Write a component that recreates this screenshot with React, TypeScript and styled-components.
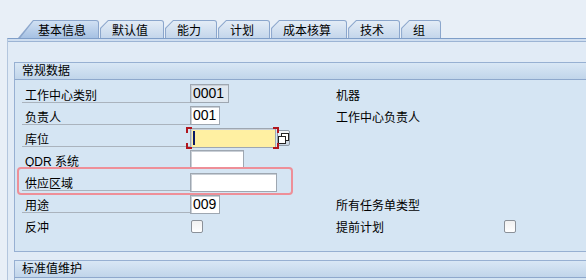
import React from 'react';
import styled, { createGlobalStyle } from 'styled-components';

const GlobalStyle = createGlobalStyle`
  html, body {
    margin: 0;
    padding: 0;
    overflow: hidden;
  }
  body {
    font-family: "Liberation Sans", "Noto Sans CJK SC", sans-serif;
  }
`;

const Screen = styled.div`
  width: 586px;
  height: 280px;
  overflow: hidden;
  box-sizing: border-box;
  padding-left: 7px;
  background: #e8eff7;
  font-size: 12px;
  color: #000;
`;

// tabs
const TabStrip = styled.div`
  display: flex;
  align-items: flex-end;
  gap: 1px;
  height: 38px;
  box-sizing: border-box;
  padding-left: 11px;
`;

const Tab = styled.div<{ $active?: boolean }>`
  position: relative;
  height: 18px;
  box-sizing: border-box;
  padding: 4px 16px 0 ${p => (p.$active ? 20 : 12)}px;
  padding-right: ${p => (p.$active ? 13 : 16)}px;
  line-height: 14px;
  white-space: nowrap;
  background: #8ba6cc;
  border-top-right-radius: 3px;
  clip-path: ${p =>
    p.$active
      ? 'polygon(0 100%, 15px 0, 100% 0, 100% 100%)'
      : 'polygon(0 100%, 0 8px, 8px 0, 100% 0, 100% 100%)'};

  &::before {
    content: '';
    position: absolute;
    top: 1px;
    left: 1px;
    right: 1px;
    bottom: 0;
    border-top-right-radius: 2px;
    background: ${p =>
      p.$active
        ? 'linear-gradient(#d0e0f3, #a6c1e3)'
        : 'linear-gradient(#e3ecf6, #c4d6eb)'};
    clip-path: ${p =>
      p.$active
        ? 'polygon(1.3px 100%, 14.6px 0, 100% 0, 100% 100%)'
        : 'polygon(0 100%, 0 7.4px, 7.4px 0, 100% 0, 100% 100%)'};
  }

  span {
    position: relative;
  }
`;

const TabBody = styled.div`
  height: 242px;
  border-top: 1px solid #7f9ec8;
  border-left: 1px solid #b3c6de;
  background: #e1ebf6;
`;

const StripEdge = styled.div`
  height: 2px;
  background: #cfdef0;
  border-bottom: 1px solid #9cb4d4;
`;

const Panels = styled.div`
  display: flex;
  flex-direction: column;
  gap: 8px;
  padding: 20px 0 0 6px;
`;

// group boxes
const GroupHeader = styled.div`
  height: 16px;
  line-height: 16px;
  padding-left: 7px;
  border-top: 1px solid #97b0d2;
  border-bottom: 1px solid #8ea8cc;
  border-left: 1px solid #97b0d2;
  background: linear-gradient(#d9e7f5, #c1d5ea);
`;

const GroupBody = styled.div<{ $open?: boolean }>`
  position: relative;
  background: #d5e5f3;
  border-left: 1px solid #97b0d2;
  border-bottom: ${p => (p.$open ? 'none' : '1px solid #97b0d2')};
  min-height: ${p => (p.$open ? '20px' : '0')};
`;

const FormGrid = styled.div`
  display: grid;
  grid-template-columns: 168px 146px 167px 60px;
  grid-auto-rows: 22px;
  padding: 4px 0 13px 7px;
`;

const Label = styled.div<{ $underline?: boolean; $right?: boolean }>`
  height: 19px;
  box-sizing: border-box;
  display: flex;
  align-items: center;
  padding: 2px 0 0 ${p => (p.$right ? 0 : 3)}px;
  white-space: nowrap;
  border-bottom: 1px solid ${p => (p.$underline ? '#aab3bd' : 'transparent')};
`;

const Cell = styled.div<{ $pad?: number }>`
  display: flex;
  align-items: flex-start;
  padding-top: ${p => p.$pad ?? 0}px;
`;

const Field = styled.div<{ $width: number; $variant?: 'readonly' | 'focus' }>`
  width: ${p => p.$width}px;
  height: 19px;
  box-sizing: border-box;
  padding-left: 2px;
  font-size: 14px;
  line-height: 17px;
  border: 1px solid #9ea7b1;
  box-shadow: inset 1px 1px 0 #c9cfd6;
  background: ${p =>
    p.$variant === 'readonly' ? '#dfe7ef' : p.$variant === 'focus' ? '#fff0a2' : '#fff'};
  ${p => (p.$variant === 'focus' ? 'height: 20px; position: relative;' : '')}
`;

const Cursor = styled.div`
  position: absolute;
  left: 2px;
  top: 2px;
  width: 2px;
  height: 14px;
  background: #0b1a66;
`;

const FocusWrap = styled.div`
  position: relative;
  display: flex;
  align-items: flex-start;
`;

const Corner = styled.span<{ $v: 'top' | 'bottom'; $h: 'left' | 'right' }>`
  position: absolute;
  width: 4px;
  height: 4px;
  ${p => p.$v}: -1px;
  ${p => (p.$h === 'left' ? 'left: -4px;' : 'left: 83px;')}
  border-${p => p.$v}: 2px solid #b0161e;
  border-${p => p.$h}: 2px solid #b0161e;
`;

const ValueHelp = styled.div`
  width: 13px;
  height: 16px;
  margin: 2px 0 0 1px;
  box-sizing: border-box;
  border: 1px solid #8e9aa7;
  border-radius: 2px;
  background: linear-gradient(#f3f6fa, #c6d3e1);
  display: flex;
  align-items: center;
  justify-content: center;
`;

const Check = styled.div`
  width: 12px;
  height: 13px;
  margin-left: 1px;
  box-sizing: border-box;
  border: 1px solid #8b9199;
  border-radius: 2px;
  background: linear-gradient(#f1f1f1, #fff);
`;

const Marker = styled.div`
  position: absolute;
  left: 2px;
  top: 87px;
  width: 276px;
  height: 28px;
  box-sizing: border-box;
  border: 2px solid #ee8f98;
  border-radius: 4px;
  pointer-events: none;
`;

const tabs = ['基本信息', '默认值', '能力', '计划', '成本核算', '技术', '组'];

const CopyIcon = () => (
  <svg width="11" height="11" viewBox="0 0 11 11">
    <rect x="3.5" y="0.5" width="7" height="7" fill="#fff" stroke="#222" />
    <rect x="0.5" y="3.5" width="7" height="7" fill="#fff" stroke="#222" />
  </svg>
);

const App: React.FC = () => {
  return (
    <>
      <GlobalStyle />
      <Screen>
        <TabStrip>
          {tabs.map((t, i) => (
            <Tab key={t} $active={i === 0}>
              <span>{t}</span>
            </Tab>
          ))}
        </TabStrip>
        <TabBody>
          <StripEdge />
          <Panels>
            <div>
              <GroupHeader>常规数据</GroupHeader>
              <GroupBody>
                <FormGrid>
                  <Label $underline>工作中心类别</Label>
                  <Cell><Field $width={39} $variant="readonly">0001</Field></Cell>
                  <Label $right>机器</Label>
                  <Cell />

                  <Label $underline>负责人</Label>
                  <Cell><Field $width={30}>001</Field></Cell>
                  <Label $right>工作中心负责人</Label>
                  <Cell />

                  <Label $underline>库位</Label>
                  <Cell>
                    <FocusWrap>
                      <Field $width={86} $variant="focus"><Cursor /></Field>
                      <Corner $v="top" $h="left" />
                      <Corner $v="bottom" $h="left" />
                      <Corner $v="top" $h="right" />
                      <Corner $v="bottom" $h="right" />
                      <ValueHelp><CopyIcon /></ValueHelp>
                    </FocusWrap>
                  </Cell>
                  <Cell />
                  <Cell />

                  <Label $underline>QDR 系统</Label>
                  <Cell><Field $width={54} /></Cell>
                  <Cell />
                  <Cell />

                  <Label $underline>供应区域</Label>
                  <Cell $pad={1}><Field $width={87} /></Cell>
                  <Cell />
                  <Cell />

                  <Label $underline>用途</Label>
                  <Cell $pad={1}><Field $width={30}>009</Field></Cell>
                  <Label $right>所有任务单类型</Label>
                  <Cell />

                  <Label>反冲</Label>
                  <Cell $pad={4}><Check /></Cell>
                  <Label $right>提前计划</Label>
                  <Cell $pad={4}><Check /></Cell>
                </FormGrid>
                <Marker />
              </GroupBody>
            </div>
            <div>
              <GroupHeader>标准值维护</GroupHeader>
              <GroupBody $open />
            </div>
          </Panels>
        </TabBody>
      </Screen>
    </>
  );
};

export default App;
